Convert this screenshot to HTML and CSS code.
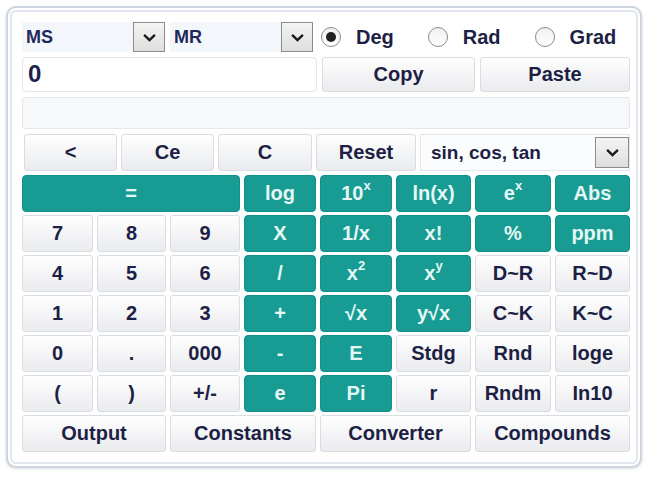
FILE: index.html
```html
<!DOCTYPE html>
<html lang="en">
<head>
  <meta charset="UTF-8"/>
  <meta name="viewport" content="width=device-width, initial-scale=1.0"/>
  <title>Scientific Calculator</title>
  <link rel="stylesheet" href="styles.css">
</head>
<body>

  <div class="calc">

    <!-- Memory + angle mode -->
    <div class="row-memory">
      <div class="picker">
        <span>MS</span>
        <span class="arrow"><svg viewBox="0 0 16 10" width="15" height="9"><path d="M2 2l6 6 6-6" fill="none" stroke="#1a1a1a" stroke-width="2.6"/></svg></span>
      </div>
      <div class="picker">
        <span>MR</span>
        <span class="arrow"><svg viewBox="0 0 16 10" width="15" height="9"><path d="M2 2l6 6 6-6" fill="none" stroke="#1a1a1a" stroke-width="2.6"/></svg></span>
      </div>
      <div class="modes">
        <label class="radio"><span class="dot checked"></span>Deg</label>
        <label class="radio"><span class="dot"></span>Rad</label>
        <label class="radio"><span class="dot"></span>Grad</label>
      </div>
    </div>

    <div class="row-display">
      <div class="display">0</div>
      <button class="btn">Copy</button>
      <button class="btn">Paste</button>
    </div>

    <div class="expression"></div>

    <div class="row-clear">
      <button class="btn">&lt;</button>
      <button class="btn">Ce</button>
      <button class="btn">C</button>
      <button class="btn">Reset</button>
      <div class="picker func">
        <span>sin, cos, tan</span>
        <span class="arrow"><svg viewBox="0 0 16 10" width="15" height="9"><path d="M2 2l6 6 6-6" fill="none" stroke="#1a1a1a" stroke-width="2.6"/></svg></span>
      </div>
    </div>

    <!-- Keypad -->
    <div class="keys">
      <button class="btn teal span3">=</button>
      <button class="btn teal">log</button>
      <button class="btn teal">10<sup>x</sup></button>
      <button class="btn teal">ln(x)</button>
      <button class="btn teal">e<sup>x</sup></button>
      <button class="btn teal">Abs</button>

      <button class="btn">7</button>
      <button class="btn">8</button>
      <button class="btn">9</button>
      <button class="btn teal">X</button>
      <button class="btn teal">1/x</button>
      <button class="btn teal">x!</button>
      <button class="btn teal">%</button>
      <button class="btn teal">ppm</button>

      <button class="btn">4</button>
      <button class="btn">5</button>
      <button class="btn">6</button>
      <button class="btn teal">/</button>
      <button class="btn teal">x<sup>2</sup></button>
      <button class="btn teal">x<sup>y</sup></button>
      <button class="btn">D~R</button>
      <button class="btn">R~D</button>

      <button class="btn">1</button>
      <button class="btn">2</button>
      <button class="btn">3</button>
      <button class="btn teal">+</button>
      <button class="btn teal">√x</button>
      <button class="btn teal">y√x</button>
      <button class="btn">C~K</button>
      <button class="btn">K~C</button>

      <button class="btn">0</button>
      <button class="btn">.</button>
      <button class="btn">000</button>
      <button class="btn teal">-</button>
      <button class="btn teal">E</button>
      <button class="btn">Stdg</button>
      <button class="btn">Rnd</button>
      <button class="btn">loge</button>

      <button class="btn">(</button>
      <button class="btn">)</button>
      <button class="btn">+/-</button>
      <button class="btn teal">e</button>
      <button class="btn teal">Pi</button>
      <button class="btn">r</button>
      <button class="btn">Rndm</button>
      <button class="btn">In10</button>

      <button class="btn span2">Output</button>
      <button class="btn span2">Constants</button>
      <button class="btn span2">Converter</button>
      <button class="btn span2">Compounds</button>
    </div>

  </div>

</body>
</html>
```

FILE: styles.css
```css
* {
  box-sizing: border-box;
}

body {
  margin: 0;
  padding: 6px;
  background-color: #ffffff;
  font-family: 'Liberation Sans', Arial, sans-serif;
  color: #1d1f44;
}

.calc {
  width: 636px;
  padding: 14px 10px 14px 14px;
  border: 2px solid #cfd5e0;
  border-radius: 10px;
  background-color: #ffffff;
  box-shadow: inset 0 0 0 2px #ffffff, inset 0 0 0 4px #e2e6ee, 0 1px 3px rgba(0, 0, 0, 0.15);
  display: flex;
  flex-direction: column;
  gap: 5px;
}

.btn {
  font-family: inherit;
  font-size: 20px;
  font-weight: bold;
  color: #1d1f44;
  background: linear-gradient(#fefefe, #eaebee);
  border: 1px solid #d9dce1;
  border-radius: 3px;
  padding: 0;
  cursor: pointer;
}

.btn sup {
  font-size: 13px;
  line-height: 0;
  vertical-align: 10px;
}

.teal {
  background: #179b93;
  border-color: #12908a;
  border-radius: 4px;
  color: #e4f7f4;
}

/* top rows */

.row-memory {
  height: 30px;
  display: flex;
  gap: 5px;
}

.picker {
  width: 143px;
  display: flex;
  align-items: center;
  justify-content: space-between;
  background-color: #f3f6fa;
  font-size: 18px;
  font-weight: bold;
  color: #1f2a5c;
  padding-left: 4px;
}

.arrow {
  width: 32px;
  height: 30px;
  display: flex;
  align-items: center;
  justify-content: center;
  border: 1px solid #8c8c8c;
  background: linear-gradient(#f4f4f4, #dedede);
}

.modes {
  flex: 1;
  display: flex;
  align-items: center;
  gap: 34px;
  padding-left: 3px;
}

.radio {
  display: flex;
  align-items: center;
  gap: 15px;
  font-size: 20px;
  font-weight: bold;
  color: #1d1f44;
}

.dot {
  width: 20px;
  height: 20px;
  border-radius: 50%;
  border: 1.5px solid #8a8a8a;
  background: linear-gradient(#f0f0f0, #ffffff);
  display: flex;
  align-items: center;
  justify-content: center;
}

.dot.checked::after {
  content: "";
  width: 10px;
  height: 10px;
  border-radius: 50%;
  background-color: #222222;
}

.row-display {
  height: 35px;
  display: flex;
  gap: 5px;
}

.display {
  width: 295px;
  background-color: #ffffff;
  border: 1px solid #e2e5ea;
  border-radius: 4px;
  font-size: 24px;
  font-weight: bold;
  color: #1d1f50;
  padding: 2px 5px;
}

.row-display .btn {
  width: 153px;
}

.row-display .btn:last-child {
  flex: 1;
}

.expression {
  height: 32px;
  background-color: #f7f8fa;
  border: 1px solid #e3e6ea;
  border-radius: 3px;
}

.row-clear {
  height: 37px;
  display: grid;
  grid-template-columns: 93px 93px 94px 100px 1fr;
  gap: 4px;
  padding-left: 2px;
  margin-bottom: -1px;
}

.picker.func {
  width: auto;
  background-color: #fbfcfd;
  border: 1px solid #e2e5ea;
  padding-left: 10px;
  font-size: 19px;
  color: #1d1f44;
}

.picker.func .arrow {
  height: 31px;
  width: 34px;
}

/* keypad */

.keys {
  display: grid;
  grid-template-columns: 71px 69px 70px 72px 72px 75px 76px 75px;
  grid-auto-rows: 37px;
  gap: 3px 4px;
}

.span2 {
  grid-column: span 2;
}

.span3 {
  grid-column: span 3;
}
```
